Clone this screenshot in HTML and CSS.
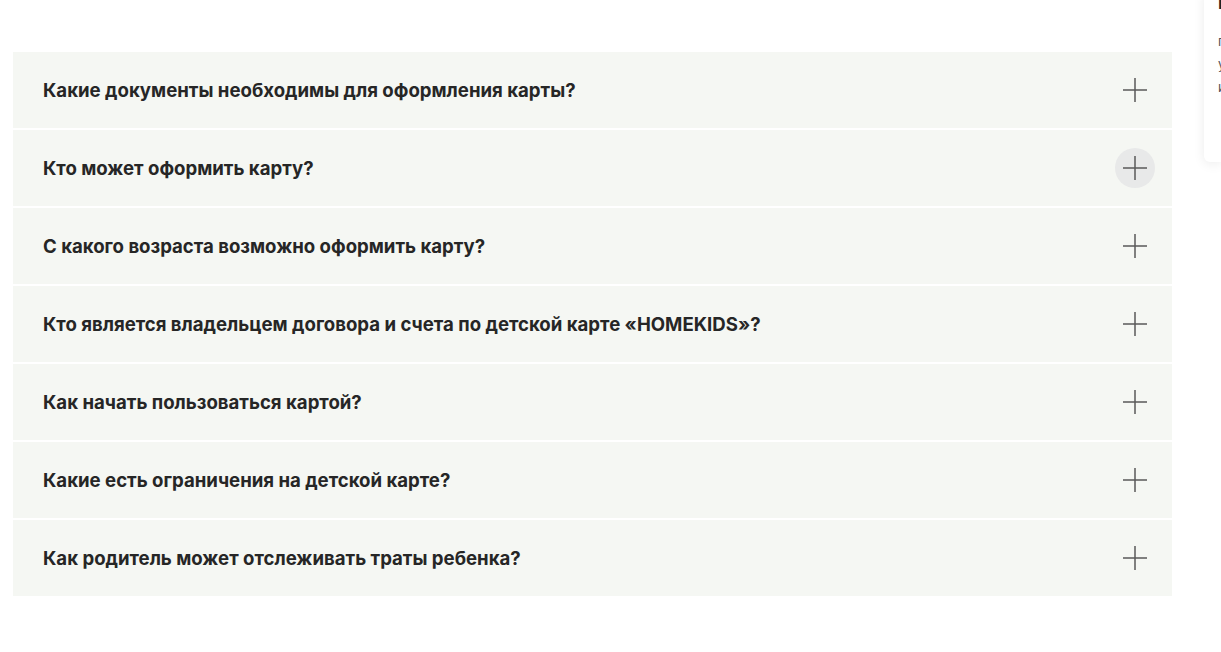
FILE: index.html
```html
<!DOCTYPE html>
<html lang="ru">
<head>
  <meta charset="UTF-8">
  <meta name="viewport" content="width=device-width, initial-scale=1.0">
  <title>Вопросы и ответы</title>
  <link rel="stylesheet" href="styles.css">
</head>
<body>
  <div class="faq">
    <div class="faq-item">
      <span class="question">Какие документы необходимы для оформления карты?</span>
      <button class="toggle"><svg viewBox="0 0 24 24"><path d="M12 0v24M0 12h24"/></svg></button>
    </div>
    <div class="faq-item">
      <span class="question">Кто может оформить карту?</span>
      <button class="toggle hover"><svg viewBox="0 0 24 24"><path d="M12 0v24M0 12h24"/></svg></button>
    </div>
    <div class="faq-item">
      <span class="question">С какого возраста возможно оформить карту?</span>
      <button class="toggle"><svg viewBox="0 0 24 24"><path d="M12 0v24M0 12h24"/></svg></button>
    </div>
    <div class="faq-item">
      <span class="question">Кто является владельцем договора и счета по детской карте «HOMEKIDS»?</span>
      <button class="toggle"><svg viewBox="0 0 24 24"><path d="M12 0v24M0 12h24"/></svg></button>
    </div>
    <div class="faq-item">
      <span class="question">Как начать пользоваться картой?</span>
      <button class="toggle"><svg viewBox="0 0 24 24"><path d="M12 0v24M0 12h24"/></svg></button>
    </div>
    <div class="faq-item">
      <span class="question">Какие есть ограничения на детской карте?</span>
      <button class="toggle"><svg viewBox="0 0 24 24"><path d="M12 0v24M0 12h24"/></svg></button>
    </div>
    <div class="faq-item">
      <span class="question">Как родитель может отслеживать траты ребенка?</span>
      <button class="toggle"><svg viewBox="0 0 24 24"><path d="M12 0v24M0 12h24"/></svg></button>
    </div>
  </div>

  <div class="popup">
    <div class="popup-title">Н</div>
    <p class="popup-text">п<br>у<br>и</p>
  </div>
</body>
</html>
```

FILE: styles.css
```css
html, body {
  margin: 0;
  background-color: #fff;
  font-family: Inter, 'Noto Sans', sans-serif;
  color: #262626;
}

body {
  padding: 52px 49px 0 13px;
  overflow: hidden;
}

.faq {
  display: flex;
  flex-direction: column;
  gap: 2px;
}

.faq-item {
  height: 76px;
  display: flex;
  align-items: center;
  justify-content: space-between;
  padding: 0 17px 0 30px;
  background-color: #f5f7f3;
}

.question {
  font-size: 18.6px;
  font-weight: 700;
}

.toggle {
  width: 40px;
  height: 40px;
  border: none;
  border-radius: 50%;
  background: transparent;
  padding: 8px;
  display: flex;
  align-items: center;
  justify-content: center;
  cursor: pointer;
}

.toggle svg {
  width: 24px;
  height: 24px;
  stroke: #5a5a5a;
  stroke-width: 1.5;
  fill: none;
}

.toggle.hover {
  background-color: #e8e9e9;
}

.popup {
  position: absolute;
  top: -10px;
  left: 1204px;
  width: 17px;
  height: 172px;
  background: #fff;
  border-radius: 6px 0 0 6px;
  box-shadow: 0 2px 12px rgba(0, 0, 0, 0.08);
  padding: 0 0 0 14px;
  box-sizing: border-box;
  overflow: hidden;
}

.popup-title {
  margin-top: 2px;
  font-size: 18px;
  font-weight: 700;
  color: #222;
}

.popup-text {
  margin: 17px 0 0;
  font-size: 13px;
  line-height: 23px;
  color: #555;
}
```
